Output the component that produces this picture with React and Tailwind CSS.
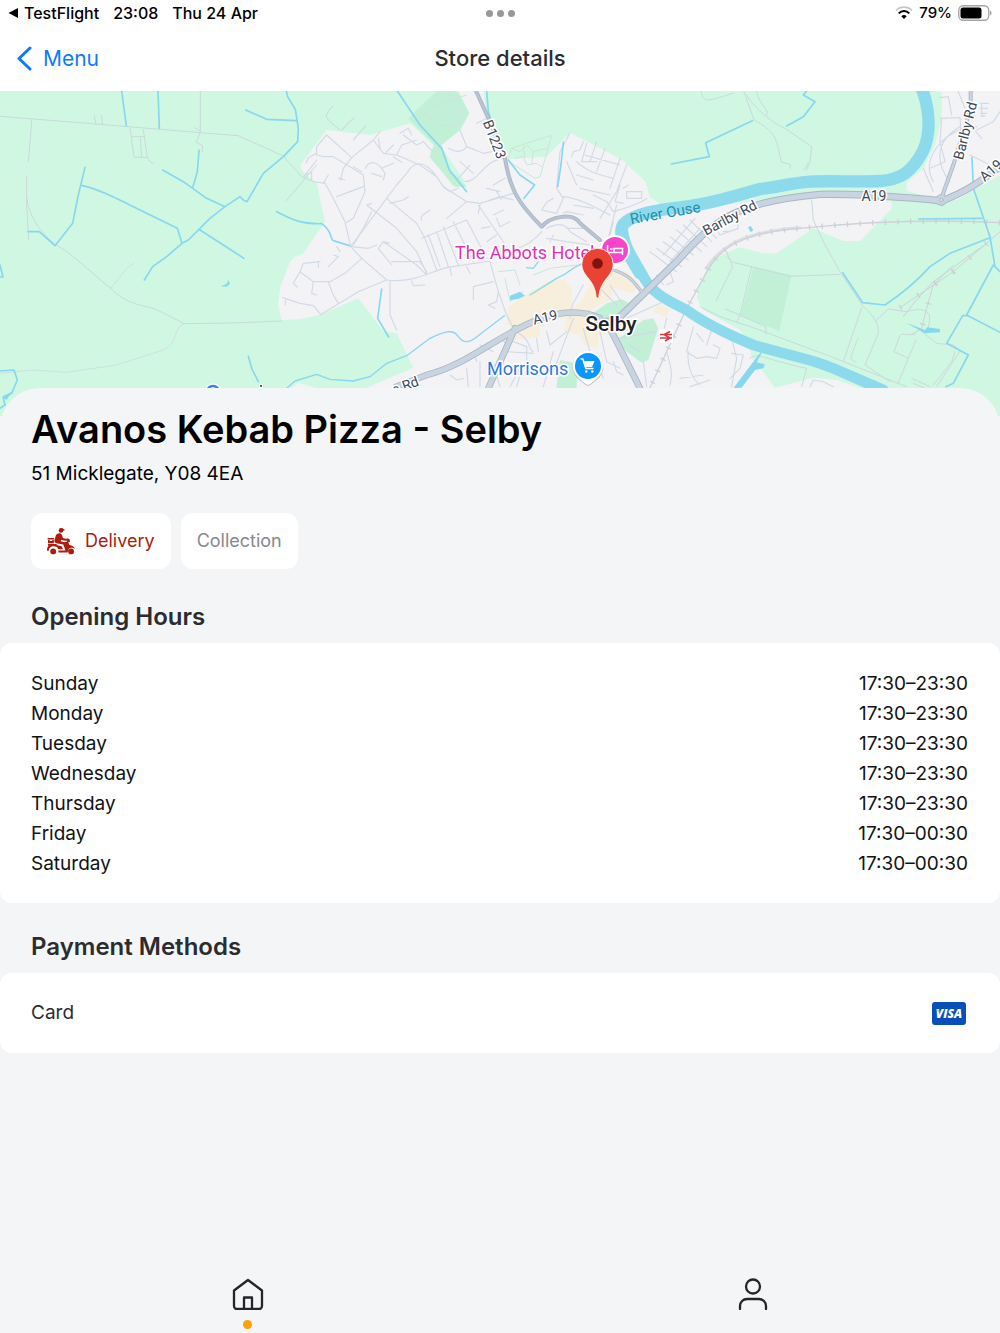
import React, { useState } from "react";

const openingHours = [
  { day: "Sunday", hours: "17:30–23:30" },
  { day: "Monday", hours: "17:30–23:30" },
  { day: "Tuesday", hours: "17:30–23:30" },
  { day: "Wednesday", hours: "17:30–23:30" },
  { day: "Thursday", hours: "17:30–23:30" },
  { day: "Friday", hours: "17:30–00:30" },
  { day: "Saturday", hours: "17:30–00:30" },
];

const StatusBar = () => (
  <div className="grid h-[26px] grid-cols-3 items-center px-2 font-medium text-black">
    <div className="flex items-center text-base">
      <svg className="mr-1.5 h-2.5 w-2.5" viewBox="0 0 10 10">
        <path d="M0.5 5 10 0v10z" />
      </svg>
      <span className="mr-3.5">TestFlight</span>
      <span className="mr-3.5">23:08</span>
      <span>Thu 24 Apr</span>
    </div>
    <div className="flex justify-center gap-1">
      <span className="h-[7px] w-[7px] rounded-full bg-[#98989b]" />
      <span className="h-[7px] w-[7px] rounded-full bg-[#98989b]" />
      <span className="h-[7px] w-[7px] rounded-full bg-[#98989b]" />
    </div>
    <div className="flex items-center justify-end text-[15px]">
      <svg className="mr-1.5 h-3.5 w-[18px]" viewBox="0 0 54 42" fill="none">
        <path d="M3 13C16 0 38 0 51 13" stroke="#c9c9cb" strokeWidth="5" />
        <path d="M11 22C20 13 34 13 43 22" stroke="#000" strokeWidth="6" />
        <path d="M19 31C24 26 30 26 35 31L27 39z" fill="#000" />
      </svg>
      <span className="mr-1.5">79%</span>
      <svg className="h-4 w-[34px]" viewBox="0 0 34 16">
        <rect x="0.75" y="0.75" width="30" height="14.5" rx="4.5" fill="none" stroke="#a3a3a5" strokeWidth="1.3" />
        <rect x="2.5" y="2.5" width="21" height="11" rx="2.5" />
        <path d="M32 5.5c2 .8 2 4.200 0 5z" fill="#a3a3a5" />
      </svg>
    </div>
  </div>
);

// Land, water and roads share one drawing grid of three units per pixel.
const MapBase = () => (
  <g transform="translate(0 85) scale(0.33333)" strokeLinecap="round" strokeLinejoin="round" fill="none">
    <rect x="0" y="0" width="3000" height="1020" fill="#d0f7e2" />

    {/* built-up areas */}
    <g fill="#f3f3f6">
      <path d="M1376 18H1450L1460 100 1525 222 1640 215 1710 143 1830 205 1870 228 1938 292 1948 335 1985 360 2070 372 2240 350 2440 325 2675 335V372L2580 468H2530L2440 430 2330 505 2290 505 2220 487 2140 520 2100 595 2090 640 2110 675 2220 735 2250 790 2255 820 2285 855 2325 908 2440 878 2510 885 2580 908V1020H1100V908L1240 848 1190 745 1150 738 1075 640 960 690 900 702 845 705 834 660 840 610 870 530 885 515 908 508 975 410 950 295 905 256 903 238 980 135 1110 150 1230 115 1300 180 1290 215 1360 305 1395 290 1320 180 1380 135 1408 85z" />
      <path d="M2825 18V100L2805 180 2770 250 2720 292 2720 318 2790 335 2870 345 3000 270V18z" />
      <path d="M865 915 895 893 960 912z" />
    </g>

    {/* parks */}
    <g fill="#c2f0d7">
      <path d="M1225 100 1310 18H1360L1376 25 1408 85 1380 135 1325 180 1352 258 1402 305 1366 306 1288 215 1303 180z" />
      <path d="M2260 545 2375 570 2338 738 2222 692z" />
      <path d="M1775 688 1820 655 1865 642 1888 655 1860 695 1800 702z" />
      <path d="M1850 765 1930 705 1960 700 1975 730 1945 825 1925 833 1880 800z" />
      <path d="M1680 825 1730 835V915H1668z" />
    </g>

    {/* town centre */}
    <g fill="#f7efdb">
      <path d="M1525 665 1555 645 1640 590 1695 584 1716 610 1718 672 1750 640 1770 600 1760 570 1880 560 1920 600 1900 625 1840 608 1830 645 1780 668 1770 690 1870 720 1850 760 1800 740 1790 790 1750 780 1740 750 1690 740 1700 700 1620 712 1620 755 1540 765 1550 725 1520 720z" />
      <path d="M1968 655 2010 672 1998 698 1960 680z" />
    </g>

    {/* lanes across the fields */}
    <g stroke="#cad9dc" strokeWidth="3">
      <path d="M0 94 300 118 600 143 715 152 850 213 905 275 940 290 975 295" />
      <path d="M601 18V143L588 172 608 182 606 202" />
      <path d="M95 103 92 150 85 230M80 275V360L86 465M80 340C90 400 120 440 165 478 210 500 270 560 332 610 380 660 430 660 470 674L553 716 700 714 845 708" />
      <path d="M332 610 380 550 401 535M553 716C515 730 540 770 490 795L350 840 200 862 100 855 0 865" opacity="0.7" />
      <path d="M390 130 402 217H442L430 135M396 155H434M421 156 425 217M442 217 450 230 462 236M283 92 288 118M305 90 307 118M584 128 600 138" />
      <path d="M858 348 914 282 950 240M1000 62 985 78 978 95 990 110 1020 135" />
      <path d="M2104 20C2110 55 2120 50 2200 24M2232 20 2262 105C2320 135 2330 160 2338 205L2345 232 2370 238 2372 250M2240 30C2270 80 2330 120 2352 128L2435 185 2430 230 2420 255M2425 235 2412 255M2270 20C2275 60 2310 70 2300 90" />
      <path d="M2435 345 2440 405 2470 470 2520 560 2590 665C2630 700 2635 720 2635 745L2595 840 2670 890" />
      <path d="M2255 545 2370 574 2520 568M2255 545 2220 690 2210 712M2220 690 2175 672M2180 500 2198 545 2148 648M2180 515 2200 532 2255 545M2585 668 2530 830M2575 758C2545 830 2550 820 2568 832M2100 665 2160 695 2260 728 2480 810 2720 905M2222 692 2298 725V748" />
      <path d="M2625 710 2665 672 2720 680C2790 660 2800 690 2780 740M2705 748H2745M2700 750 2682 800 2725 820M2748 765 2694 895M2765 740 2810 775 2860 780 2880 798 2810 905M2865 800 2855 830 2800 900M2735 880 2790 905M2740 895 2775 910M2250 820C2270 800 2300 825 2420 850L2405 905" />
    </g>

    {/* residential streets */}
    <g stroke="#d2dae6" strokeWidth="3.500">
      <path d="M975 295 1000 340 1035 410 1052 485 1085 520 1160 585C1240 595 1290 560 1340 548L1470 528" />
      <path d="M980 150 950 185V210L970 215H1000L1050 245 1090 270 1095 320 1060 400 1040 412M980 150 1055 218M912 275 950 225M950 205 925 218 918 235M1055 218 1030 250 1022 285M1055 218 1120 165 1140 140M1010 335 1090 305M1025 135 1062 98M1060 165 1097 122M1015 280 1035 285M1060 245 1085 260M920 270 935 262 935 285M970 295 985 270" />
      <path d="M1120 165 1150 205 1190 210 1260 240 1310 275 1330 305 1400 350 1440 355 1540 325M1052 485 1160 340 1190 300 1220 265C1240 230 1270 220 1310 275M1155 205 1180 180M1190 210 1205 180 1250 165M1200 145 1225 130 1235 150M1210 150 1250 180 1270 170 1298 200M1140 190 1135 160M1095 250C1110 225 1130 230 1145 250L1180 235M1145 250 1155 265 1150 285M1115 265 1145 275M1205 232 1180 215" />
      <path d="M1160 340 1250 415 1275 460 1310 555M1170 355 1210 345 1225 335M1100 360 1190 430 1250 500 1280 565M1100 360 1115 355M1115 380 1090 430 1060 480M1150 470 1250 540 1280 570M1135 490 1150 470 1168 475M1135 490 1175 540M1175 530H1260L1280 560M1265 460 1340 430 1400 405 1460 520M1285 450 1320 545M1310 440 1345 545M1330 425 1375 540M1360 410 1420 530M1265 405C1260 390 1275 385 1290 375M1160 585 1100 610 1075 620 960 690M1330 305 1350 320 1375 310M1400 350 1340 400" />
      <path d="M900 560 940 590H990L1035 565 1085 520M900 560 910 535 960 530M900 560 880 595 892 606M940 590 935 625 950 630M985 592 1000 630 1015 655M955 530V548M985 545 1015 515 1000 510M848 638 900 655 940 662 960 685M858 640 855 660M1010 485 1020 500M1055 485 1105 490 1130 480" />
      <path d="M1170 590V690L1190 735M1235 588 1240 602 1275 600M1420 645V605L1480 590M1495 620 1490 650 1465 660 1485 670M1470 530 1495 620 1520 690 1540 730M1400 545 1410 565M1350 550 1355 572M1440 360 1435 385M1435 360 1530 500M1480 390 1510 375M1445 430 1470 425M1460 470 1490 450M1490 400 1500 425 1530 410M1530 500C1580 480 1600 470 1625 440" />
      <path d="M1380 135 1400 185 1450 205 1500 195M1345 190C1370 205 1390 200 1400 185M1380 230 1420 265M1350 265 1375 280 1410 240M1395 290C1440 290 1450 220 1520 220M1460 310 1500 320M1480 300 1515 280M1470 345 1500 335 1540 345M1430 115 1460 100M1490 320 1505 345" />
      <path d="M1710 143 1680 200 1670 310 1690 340 1670 385 1625 375 1640 352 1660 340M1700 230 1730 300M1715 215 1720 200 1740 195 1750 170M1760 175 1745 230 1790 230M1755 210 1790 220 1860 240M1790 170 1770 230M1815 190 1790 260M1860 220 1830 310M1880 240 1850 320 1800 400M1730 230C1760 260 1800 270 1840 280M1730 270 1780 285M1740 310 1830 330M1780 330 1820 350 1840 380M1690 335C1740 340 1790 370 1830 390M1840 380C1880 370 1930 350 1940 340M1880 320H1925V340H1880zM1870 310 1885 300M1750 390 1700 380 1690 385M1860 300 1845 350 1870 355M1720 360 1780 370" />
      <path d="M1640 430C1680 410 1700 420 1710 440L1760 470M1640 460 1700 470 1770 480M1660 450 1650 470M1700 430 1750 430M1840 410 1830 450M1850 360C1835 420 1830 440 1825 460M1950 500 2030 560M1970 490 2045 545M1990 470 2065 525M2010 455 2080 510M2030 435 2105 500M2050 420 2120 485M2070 405 2135 470M1990 510 2085 400M2010 530 2100 430M2120 430 2150 460M2140 420 2160 450 2215 430 2210 400M2170 440 2195 438M1970 570 1990 600M2010 560 2020 590 2000 600" />
      <path d="M1880 700 1990 650 2140 720 2195 760 2210 820 2195 905M1890 780 1920 800M1850 760 1970 740M2000 700 1985 760M2080 725 2060 800M2140 720 2120 780M2060 800 2090 820 2120 815 2150 820M2065 800C2060 840 2075 880 2100 900M2040 880 2110 870M2070 905 2130 885M2150 820 2160 790 2140 780M2195 805 2230 810 2220 850 2190 880M1930 830 1940 905M2000 800C2010 840 2020 860 2010 900M2430 905 2440 885 2470 890 2500 905M2110 770 2090 745" />
      <path d="M1540 770 1580 785V840L1550 850M1520 800 1600 805M1500 830 1560 870 1550 905M1550 740C1600 770 1580 790 1600 800M1610 760 1615 800M1480 840 1500 905M1400 850 1405 905M1440 830V905M1350 870 1370 885 1390 880M1640 740 1650 780 1700 740M1660 800 1630 905M1720 700 1660 860M1750 730 1770 800M1800 740 1820 830 1860 850M1560 850 1530 905M1500 755 1530 790M1440 780 1480 800M1420 800 1430 830M1800 850 1810 880M1840 830 1850 860 1870 870M1750 600C1730 640 1710 660 1710 700M1830 600 1870 660M1800 610 1850 660" />
      <path d="M2820 100 2880 98 2882 130 2930 125M2825 100 2820 170 2835 230 2790 250M2890 130C2830 150 2760 220 2800 290M2880 125C2800 170 2810 240 2850 290M2820 38 2845 35 2855 90M2875 20 2895 70M2940 55H2965M2940 70H2962M2942 85H2960M2945 55V95L2955 92M2930 135 2980 110 3000 80M2920 130 2945 160M2910 210 2960 235M2770 250 2800 320" />
    </g>
    <path d="M1525 222 1535 190 1640 155 1655 152 1620 275 1605 280 1535 235M1535 190 1560 200 1580 180 1600 200 1640 190M1545 220 1570 215 1580 240 1610 235 1625 245M1570 185 1575 215M1600 200 1595 235M1495 560 1545 555 1560 600M1515 580 1530 650 1570 620M1600 570 1650 550 1730 540M1270 90 1310 60 1400 30M1275 60 1300 120 1370 125 1390 80 1340 20" stroke="#cbe5da" strokeWidth="3" />

    {/* railway */}
    <g stroke="#cdd1d8">
      <path d="M3000 413C2800 402 2600 410 2400 430 2200 445 2150 500 2110 580L2060 670 1950 908" strokeWidth="4" />
      <path d="M2400 428C2220 440 2160 490 2118 550" strokeWidth="9" opacity="0.6" />
      <path d="M3000 440 2960 475 2860 560 2700 668M2960 475 2800 590 2745 650M2860 540 2800 600 2780 670 2765 730 2735 750M2745 650 2710 695" strokeWidth="3" />
      <path d="M3000 413C2800 402 2600 410 2400 430 2200 445 2150 500 2110 580L2060 670 1950 908" strokeWidth="17" strokeDasharray="4 34" strokeLinecap="butt" />
      <path d="M2960 475 2860 560 2700 668M2860 560 2800 600 2765 730" strokeWidth="17" strokeDasharray="4 60" strokeLinecap="butt" />
    </g>

    {/* river */}
    <path d="M2765 10C2785 60 2798 140 2768 200 2735 262 2700 284 2640 288 2560 292 2500 286 2430 290 2370 294 2330 308 2280 312 2200 335 2120 358 2040 367 1980 374 1900 385 1870 418 1850 450 1880 500 1920 565" stroke="#8edaed" strokeWidth="37" />
    <path d="M1868 430C1870 480 1900 520 1925 565 1950 620 1990 640 2060 675 2120 720 2200 755 2260 780 2360 810 2430 820 2500 850L2650 915" stroke="#8edaed" strokeWidth="32" />

    {/* drains and streams */}
    <g stroke="#87d7ef" strokeWidth="5">
      <path d="M365 18 379 122M474 18 478 130M859 18 863 35 886 73 895 130 893 170 850 215 790 265 741 350 730 345 720 335 675 365 630 400 565 465 546 475 500 515 458 545 433 585M737 75 800 103 890 107M488 255 550 290 620 340 675 365M597 195 592 260 579 305M600 435 732 520M255 247 235 330 218 415 165 482 118 440H84M247 302C300 312 400 365 400 365L532 430 546 475M0 540 9 576H0M0 858 42 855 52 885 35 925 10 940 15 960 0 970M745 814 755 850 775 890" />
      <path d="M830 380C870 400 900 418 965 416 1000 440 990 465 1000 467L1048 482M1192 18 1260 120 1325 190 1348 255 1400 320M1145 612 1133 700 1166 756M1460 18 1465 80 1475 110M1525 225 1560 270 1604 300 1572 340M1690 172 1683 240 1673 305" />
      <path d="M860 910 885 888 950 868 990 883 1060 888 1110 875 1160 835 1220 812 1290 760C1330 740 1360 730 1375 755 1400 790 1430 755 1450 740L1513 692M1590 630 1670 580C1720 560 1710 545 1755 535M1580 548 1600 550 1615 530" strokeWidth="4" />
      <path d="M2014 237 2128 215 2117 173 2257 107M2360 123 2410 95 2445 50 2410 30 2420 18M2756 402 2945 400M2916 218 2920 310 2970 455 2985 545 3000 560M2970 458 2850 505 2790 545C2750 590 2700 630 2655 660L2588 653 2528 563M2980 540 2900 690 3000 742M2900 692H2888L2840 775 2905 810 2860 895 2838 905" />
    </g>
    <g fill="#87d7ef">
      <path d="M662 604 680 597 685 585 690 596 680 605zM1530 632 1560 620 1575 632 1555 642 1530 645zM2244 427 2252 423 2260 435 2252 442zM2718 713 2775 735 2782 727 2820 732 2820 742 2775 745z" />
      <path d="M2200 910 2245 850 2283 800 2285 805 2270 832 2295 838 2290 850 2265 855 2225 908zM5 935 35 920 20 945z" />
    </g>

    {/* main roads */}
    <g stroke="#aab5c6">
      <path d="M1428 18 1470 110 1515 220C1530 310 1550 350 1625 425 1650 395 1720 380 1740 415L1800 465" strokeWidth="12" />
      <path d="M1840 555C1890 570 1900 590 1925 620" strokeWidth="10" />
      <path d="M1190 905 1280 870C1400 840 1480 760 1600 710 1690 670 1760 680 1800 700M1465 910 1545 730M1830 730 1920 910" strokeWidth="20" />
      <path d="M1800 712 1850 705 2030 530C2140 410 2200 350 2460 328 2600 325 2700 338 2785 343L2825 348M2825 348C2900 320 2940 290 3000 245" strokeWidth="22" />
      <path d="M2912 18V70L2860 240 2824 340" strokeWidth="12" />
      <circle cx="2824" cy="345" r="17" fill="#aab5c6" />
    </g>
    <g stroke="#c9d4e1">
      <path d="M1428 18 1470 110 1515 220C1530 310 1550 350 1625 425 1650 395 1720 380 1740 415L1800 465" strokeWidth="7" stroke="#b9c4d3" />
      <path d="M1840 555C1890 570 1900 590 1925 620" strokeWidth="6" />
      <path d="M1190 905 1280 870C1400 840 1480 760 1600 710 1690 670 1760 680 1800 700M1465 910 1545 730M1830 730 1920 910" strokeWidth="15" />
      <path d="M1800 712 1850 705 2030 530C2140 410 2200 350 2460 328 2600 325 2700 338 2785 343L2825 348M2825 348C2900 320 2940 290 3000 245" strokeWidth="16" />
      <path d="M2912 18V70L2860 240 2824 340" strokeWidth="7" />
      <circle cx="2824" cy="345" r="14" fill="#c9d4e1" />
      <circle cx="2824" cy="345" r="5" fill="#d0f7e2" stroke="#aab5c6" strokeWidth="3" />
    </g>
  </g>
);

const StoreMap = () => (
  <svg
    className="block h-[325px] w-full font-[Roboto,sans-serif]"
    viewBox="0 91 1000 325"
    preserveAspectRatio="xMidYMid slice"
    role="img"
    aria-label="Selby"
  >
    <MapBase />

    {/* road and river names */}
    <g fontSize="14" fill="#3c4858" stroke="#fff" strokeWidth="3" strokeLinejoin="round" paintOrder="stroke" textAnchor="middle">
      <text transform="translate(490 141) rotate(69)">B1223</text>
      <text transform="translate(546 322) rotate(-13)">A19</text>
      <text transform="translate(874 201)">A19</text>
      <text transform="translate(994 174) rotate(-42)">A19</text>
      <text transform="translate(732 222) rotate(-28)">Barlby Rd</text>
      <text transform="translate(970 132) rotate(-76)">Barlby Rd</text>
      <text transform="translate(407 390) rotate(-20)">s Rd</text>
      <text transform="translate(666 218) rotate(-10)" fill="#2191a6" stroke="none" fontSize="15">River Ouse</text>
    </g>

    {/* hotel */}
    <text x="455" y="259" fontSize="18" fill="#e32fb5" stroke="#fff" strokeWidth="3" paintOrder="stroke">The Abbots Hotel</text>
    <path d="M615 235a15 15 0 0 1 10.500 25.500l-7.500 7q-3 2.500-6 0l-7.500-7A15 15 0 0 1 615 235z" fill="#fff" />
    <circle cx="615" cy="250" r="13" fill="#f745cb" />
    <path d="M607.500 245v10M607.500 252.500h15M622.500 255v-6.500h-8.500v4M610 249h2.500" stroke="#fff" strokeWidth="1.500" fill="none" />

    {/* station */}
    <rect x="659" y="329" width="14" height="14" rx="2" fill="#fff" />
    <path d="M660 334.500h12M660 338h12M670 331.500l-6 3 6 3.500-5 3" stroke="#e2343c" strokeWidth="1.500" fill="none" />

    {/* supermarket */}
    <text x="487" y="375" fontSize="18" fill="#2a78e4" stroke="#fff" strokeWidth="3" paintOrder="stroke">Morrisons</text>
    <path d="M588 351.500a15.500 15.500 0 0 1 11 26.500l-8 6.500q-3 2.500-6 0l-8-6.500a15.500 15.500 0 0 1 11-26.500z" fill="#b9bec5" />
    <path d="M588 351a15 15 0 0 1 10.500 26l-7.500 6.500q-3 2.500-6 0l-7.500-6.500A15 15 0 0 1 588 351z" fill="#fff" />
    <circle cx="588" cy="366" r="13" fill="#0b96fb" />
    <path d="M583 361h11.500l-2.500 6h-7.500z" fill="#fff" />
    <path d="M580.500 359h2.300l3.200 9.500h7.500" stroke="#fff" strokeWidth="1.500" fill="none" />
    <circle cx="586.300" cy="371.500" r="1.300" fill="#fff" />
    <circle cx="592.300" cy="371.500" r="1.300" fill="#fff" />

    <text x="611" y="331" fontSize="21" fontWeight="500" textAnchor="middle" fill="#1f2328" stroke="#fff" strokeWidth="3" paintOrder="stroke">Selby</text>

    {/* labels running in under the panel */}
    <circle cx="213" cy="392" r="8.500" fill="#fff" />
    <circle cx="213" cy="392" r="6" fill="none" stroke="#3b7df0" strokeWidth="2.500" />
    <rect x="259" y="384" width="4" height="5" fill="#fff" />
    <rect x="260" y="385" width="2" height="2" fill="#16913f" />

    {/* store pin */}
    <path d="M597.500 298c-.9 0-1.300-.6-1.400-1.500-.8-8.500-3.600-13-8-18.500-3.300-4-6.300-8-6.300-14a15.700 15.700 0 0 1 31.400 0c0 6-3 10-6.300 14-4.400 5.500-7.200 10-8 18.500-.1.900-.5 1.500-1.400 1.500z" fill="#ea4335" stroke="#fff" strokeWidth="0.800" />
    <circle cx="597.500" cy="263.500" r="5.300" fill="#7f140f" />
  </svg>
);

const ScooterIcon = () => (
  <svg className="h-[27px] w-7" viewBox="52 68 86 81" fill="#ab1c0e">
    <circle cx="95" cy="75" r="7" />
    <path d="M90 70q4-4 9-2l7 4v3H92z" />
    <path d="M54 98h20v4H54zM55 104h18v10H55zM60 104v3h8v-3z" />
    <path d="M87 84c5-3 10 0 11 5l3 9 9 2 7-1 1 4-9 3-13-2-2 4 11 3c4 1 6 3 7 6l5 19h-8l-7-18-21-4c-5-1-7-4-6-9l4-15c1-3 5-5 8-6z" />
    <path d="M112 100l9 1 2 9-6 1 4 8c9 1 14 5 17 12l-8-3c-7-2-12 2-13 9l-2 5H87v-6h22l2-6-6-19 8-2z" />
    <path d="M55 116h25l4 4 13 3 4 9H87c-3-7-8-9-15-9-9 0-14 5-15 14h-5c0-7 1-11 4-14z" />
    <circle cx="71" cy="139" r="9" />
    <circle cx="126" cy="139" r="9" />
  </svg>
);

const VisaIcon = () => (
  <svg className="mr-0.5 h-[23px] w-[34px]" viewBox="0 0 34 23" role="img" aria-label="Visa">
    <rect width="34" height="23" rx="3" fill="#0850b8" />
    <text x="17" y="16" textAnchor="middle" fontSize="12" fontWeight="800" fontStyle="italic" fill="#fff" fontFamily="Open Sans, sans-serif">
      VISA
    </text>
    <path d="M3.500 7.500h3l1 3.500c-1-1.600-2.200-2.600-4-3.500z" fill="#f5b81c" />
  </svg>
);

export const StoreDetails = () => {
  // Which order type is highlighted
  const [orderType, setOrderType] = useState("delivery"); // 'delivery' or 'collection'

  return (
    <div className="flex min-h-screen flex-col bg-[#f4f5f7] font-[Inter,sans-serif] text-[#2b2c30]">
      <header className="bg-white">
        <StatusBar />
        <div className="grid h-[65px] grid-cols-3 items-center px-4">
          <a href="#menu" className="flex items-center gap-2.5 text-[21px] text-[#0a7aff]">
            <svg className="h-[25px] w-[17px]" viewBox="0 0 17 25" fill="none" stroke="currentColor" strokeWidth="3" strokeLinecap="round" strokeLinejoin="round">
              <path d="M14 2 3 12.500 14 23" />
            </svg>
            Menu
          </a>
          <h1 className="text-center text-[22px] font-medium">Store details</h1>
        </div>
      </header>

      <StoreMap />

      <main className="relative -mt-7 rounded-t-[40px] bg-[#f4f5f7] pt-[15px]">
        <div className="pr-8 pl-[31px]">
          <h2 className="text-[38px] leading-[52px] font-semibold text-black">Avanos Kebab Pizza - Selby</h2>
          <p className="mt-[5px] text-[19px] leading-7 text-black">51 Micklegate, Y08 4EA</p>

          {/* Order types */}
          <div className="mt-[25px] flex gap-2.5">
            <button
              onClick={() => setOrderType("delivery")}
              className={`flex h-14 items-center gap-2.5 rounded-xl bg-white px-4 text-lg ${
                orderType === "delivery" ? "text-[#ab1c0e]" : "text-[#88898c]"
              }`}
            >
              <ScooterIcon />
              Delivery
            </button>
            <button
              onClick={() => setOrderType("collection")}
              className={`flex h-14 items-center rounded-xl bg-white px-4 text-lg ${
                orderType === "collection" ? "text-[#ab1c0e]" : "text-[#88898c]"
              }`}
            >
              Collection
            </button>
          </div>
        </div>

        <section className="mt-[30px]">
          <h3 className="pr-8 pl-[31px] text-2xl leading-9 font-semibold">Opening Hours</h3>
          <div className="mt-2 rounded-xl bg-white pt-[26px] pr-8 pb-6 pl-[31px]">
            <table className="w-full text-[19px] leading-[30px] text-[#111214]">
              <tbody>
                {openingHours.map((row) => (
                  <tr key={row.day}>
                    <th scope="row" className="p-0 text-left font-normal">{row.day}</th>
                    <td className="p-0 text-right">{row.hours}</td>
                  </tr>
                ))}
              </tbody>
            </table>
          </div>
        </section>

        <section className="mt-[26px]">
          <h3 className="pr-8 pl-[31px] text-2xl leading-9 font-semibold">Payment Methods</h3>
          <div className="mt-2 flex h-20 items-center justify-between rounded-xl bg-white pr-8 pl-[31px] text-[19px]">
            <span>Card</span>
            <VisaIcon />
          </div>
        </section>
      </main>

      <nav className="mt-auto grid grid-cols-2 gap-2.5 pb-1">
        <a href="#home" aria-label="Home" className="flex flex-col items-center gap-2.5">
          <svg className="h-8 w-8" viewBox="0 0 32 32" fill="none" stroke="#242529" strokeWidth="2.300" strokeLinejoin="round">
            <path d="M2 12.500 16 2l14 10.500V28a3 3 0 0 1-3 3H5a3 3 0 0 1-3-3z" />
            <path d="M12 31V19.500h8V31" />
          </svg>
          <span className="h-[9px] w-[9px] rounded-full bg-[#ff9f0a]" />
        </a>
        <a href="#account" aria-label="Account" className="flex flex-col items-center">
          <svg className="h-8 w-8" viewBox="0 0 32 32" fill="none" stroke="#242529" strokeWidth="2.300" strokeLinecap="round">
            <circle cx="16" cy="8.500" r="7" />
            <path d="M3 31v-3a7 7 0 0 1 7-7h12a7 7 0 0 1 7 7v3" />
          </svg>
        </a>
      </nav>
    </div>
  );
};

export default StoreDetails;
